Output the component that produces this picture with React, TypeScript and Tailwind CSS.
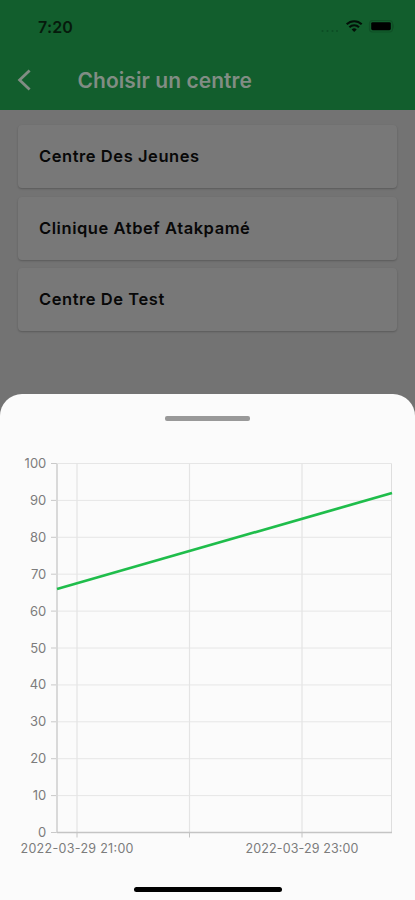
import React from 'react';

interface ChartPoint {
  x: number;
  value: number;
}

interface TimeTick {
  x: number;
  label?: string;
}

const CENTERS = ['Centre Des Jeunes', 'Clinique Atbef Atakpamé', 'Centre De Test'];

const Y_TICKS = [0, 10, 20, 30, 40, 50, 60, 70, 80, 90, 100];

const X_TICKS: TimeTick[] = [
  { x: 77, label: '2022-03-29 21:00' },
  { x: 189.5 },
  { x: 302, label: '2022-03-29 23:00' },
];

const POINTS: ChartPoint[] = [
  { x: 57, value: 66 },
  { x: 392, value: 92 },
];

const PLOT = { left: 57.5, right: 391.5, top: 13.5, bottom: 382.5 };

const toY = (value: number) => PLOT.bottom - (value / 100) * (PLOT.bottom - PLOT.top);

const StatusBar = () => (
  <div className="flex h-[52px] items-center justify-between pl-[38px] pr-[21px] pt-[2px]">
    <span className="text-[16px] font-semibold leading-none tracking-[0.2px] text-[#061a0c]">7:20</span>
    <svg width="76" height="16" viewBox="0 0 76 16" fill="none">
      <g fill="#0d4c24">
        <circle cx="4.5" cy="12" r="1" />
        <circle cx="9.5" cy="12" r="1" />
        <circle cx="14.5" cy="12" r="1" />
        <circle cx="19" cy="12" r="1" />
      </g>
      <g stroke="#031008" strokeWidth="2.1">
        <path d="M28.7 5.3a10.6 10.6 0 0 1 15 0" />
        <path d="M31.4 8.2a6.8 6.8 0 0 1 9.6 0" />
      </g>
      <path d="M33.7 10.4a3.7 3.7 0 0 1 5 0l-2.5 2.6z" fill="#031008" />
      <rect x="51.5" y="1.5" width="23" height="11.5" rx="3.2" stroke="#0f5026" strokeWidth="1.2" />
      <path d="M75.2 5c1.1.6 1.1 3.8 0 4.4z" fill="#0f5026" />
      <rect x="53.2" y="3.2" width="19.6" height="8" rx="1.4" fill="#000" />
    </svg>
  </div>
);

const Header = () => (
  <header className="h-[110px] shrink-0 bg-[#125e2d]">
    <StatusBar />
    <div className="flex h-[57px] items-center pl-[16.5px]">
      <svg className="-mt-[1px]" width="14" height="22" viewBox="0 0 14 22" fill="none" stroke="#818d84" strokeWidth="2.8">
        <path d="M12.6 1.4L2.6 11l10 9.6" />
      </svg>
      <h1 className="ml-[47px] whitespace-nowrap text-[21px] font-semibold leading-none tracking-[0.06px] text-[#818d84]">
        Choisir un centre
      </h1>
    </div>
  </header>
);

const CenterCard = ({ name }: { name: string }) => (
  <li className="flex h-[63px] items-center rounded-[4px] bg-[#787878] pl-[21px] shadow-[0_1px_2px_rgba(0,0,0,0.22)]">
    <span className="whitespace-nowrap text-[16.5px] font-semibold leading-none tracking-[0.56px] text-[#080808]">
      {name}
    </span>
  </li>
);

const EvolutionChart = () => (
  <svg className="block" width="415" height="420" viewBox="0 0 415 420">
    {Y_TICKS.map((tick) => (
      <g key={tick}>
        <line x1={PLOT.left} x2={PLOT.right} y1={toY(tick)} y2={toY(tick)} stroke="#e6e6e6" />
        <line x1="51" x2="57" y1={toY(tick)} y2={toY(tick)} stroke="#c9c9c9" />
        <text x="46.3" y={toY(tick) + 4.5} textAnchor="end" fontSize="13" fill="#7c7c7c">{tick}</text>
      </g>
    ))}
    {X_TICKS.map((tick) => (
      <g key={tick.x}>
        <line x1={tick.x} x2={tick.x} y1={PLOT.top} y2={PLOT.bottom} stroke="#e4e4e4" strokeWidth="1.2" />
        <line x1={tick.x} x2={tick.x} y1={PLOT.bottom} y2={PLOT.bottom + 5} stroke="#c4c4c4" />
        {tick.label && (
          <text x={tick.x} y="403" textAnchor="middle" fontSize="12.5" textLength="113" fill="#7c7c7c">
            {tick.label}
          </text>
        )}
      </g>
    ))}
    <line x1={PLOT.right} x2={PLOT.right} y1={PLOT.top} y2={PLOT.bottom} stroke="#dedede" />
    <line x1="57" x2="57" y1={PLOT.top} y2={PLOT.bottom} stroke="#d9d9d9" strokeWidth="2" />
    <line x1="57" x2="392" y1={PLOT.bottom} y2={PLOT.bottom} stroke="#c4c4c4" strokeWidth="1.3" />
    <polyline
      points={POINTS.map((p) => `${p.x},${toY(p.value)}`).join(' ')}
      fill="none"
      stroke="#1fbd4b"
      strokeWidth="2.7"
    />
  </svg>
);

const BottomSheet = () => (
  <section className="flex h-[506px] shrink-0 flex-col items-center rounded-t-[22px] bg-[#fbfbfb]">
    <div className="mt-[21.5px] h-[5.5px] w-[85px] shrink-0 rounded-[2px] bg-[#999999]" />
    <div className="mt-[29px]">
      <EvolutionChart />
    </div>
    <div className="mt-[16.5px] h-[5.5px] w-[148px] shrink-0 rounded-full bg-black" />
  </section>
);

export default function App() {
  return (
    <div className="flex h-[900px] w-[415px] flex-col overflow-hidden bg-[#737373] font-['Inter','Liberation_Sans',sans-serif]">
      <Header />
      <ul className="flex h-[284px] shrink-0 flex-col gap-[8.5px] px-[18px] pt-[15px]">
        {CENTERS.map((name) => (
          <CenterCard key={name} name={name} />
        ))}
      </ul>
      <BottomSheet />
    </div>
  );
}
